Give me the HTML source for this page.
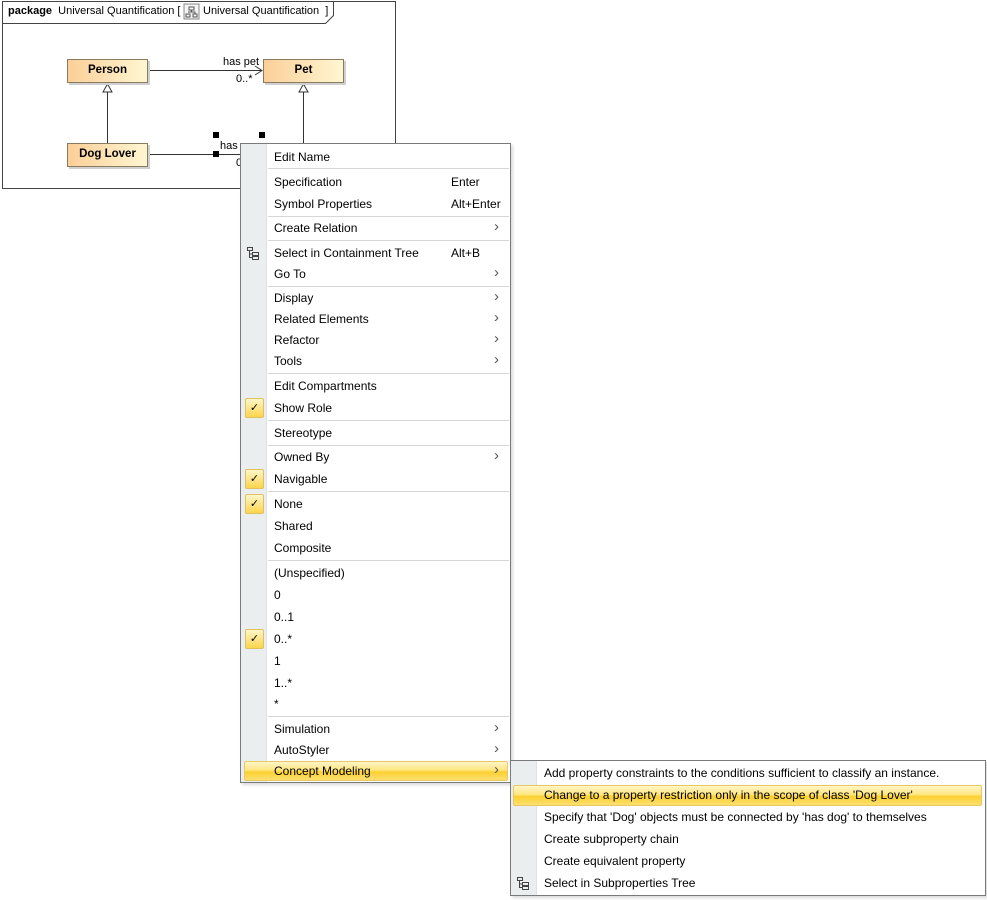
<!DOCTYPE html>
<html><head><meta charset="utf-8"><style>
*{margin:0;padding:0;box-sizing:border-box}
body{width:987px;height:900px;background:#fff;position:relative;overflow:hidden;font-family:"Liberation Sans",sans-serif}
.a{position:absolute}
.cls{position:absolute;width:81px;height:24px;border:1px solid #8a7a60;background:linear-gradient(90deg,#fbcf98,#fff6d2);font-weight:bold;font-size:11.5px;text-align:center;line-height:20px;box-shadow:2px 2px 0 #d0d0d0}
.menu{position:absolute;background:#fff;border:1px solid #7a7a7a;box-shadow:2px 2px 3px rgba(0,0,0,.15)}
.gut{position:absolute;left:0;top:0;bottom:0;width:26px;background:#eaeeee;border-right:1px solid #dfe3e3}
.it{position:absolute;font-size:12px;color:#000;line-height:14px}
.sc{position:absolute;font-size:12px;line-height:14px}
.ar{position:absolute;font-size:15px;color:#555;line-height:14px}
.sep{position:absolute;height:1px;background:#d6d6d6}
.hl{position:absolute;border:1px solid #e8c860;border-radius:2px;background:linear-gradient(#fff5c8 0%,#ffe680 45%,#fbd030 55%,#fde070 100%)}
.chk{position:absolute;width:19px;height:20px;border:1px solid #e0c060;border-radius:2px;background:linear-gradient(#fff6c8,#fbd54a);font-size:11px;text-align:center;line-height:18px}
.h{position:absolute;width:6px;height:6px;background:#000}
</style></head><body>
<svg class="a" style="left:0;top:0" width="400" height="195">
<path d="M2.5 1.5H395.5V188.5H2.5Z" fill="none" stroke="#444"/>
<path d="M2.5 23.5H325.5L333.5 15.5V1.5" fill="none" stroke="#444"/>
<rect x="184" y="4" width="15" height="15" fill="#f4f4f4" stroke="#888"/>
<path d="M189 7h5v3h-5zM186 14h4v3h-4zM193 14h4v3h-4zM191.5 10v2M188 12h7v2" fill="none" stroke="#555"/>
<line x1="148" y1="70.5" x2="262" y2="70.5" stroke="#333"/>
<path d="M255 66L262 70.5L255 75" fill="none" stroke="#333"/>
<line x1="107.5" y1="92" x2="107.5" y2="143" stroke="#333"/>
<path d="M103 92L107.5 84L112 92Z" fill="#fff" stroke="#333"/>
<line x1="303.5" y1="92" x2="303.5" y2="143" stroke="#333"/>
<path d="M299 92L303.5 84L308 92Z" fill="#fff" stroke="#333"/>
<line x1="148" y1="154.5" x2="240" y2="154.5" stroke="#333"/>
<text x="223" y="65" font-size="11" font-family="Liberation Sans">has pet</text>
<text x="236" y="82" font-size="11" font-family="Liberation Sans">0..*</text>
<text x="220" y="149" font-size="11" font-family="Liberation Sans">has</text>
<text x="236" y="166" font-size="11" font-family="Liberation Sans">0</text>
</svg>
<div class="a" style="left:8px;top:4px;font-size:11px;line-height:14px"><b>package</b>&nbsp; Universal Quantification [</div>
<div class="a" style="left:203px;top:4px;font-size:11px;line-height:14px">Universal Quantification&nbsp; ]</div>
<div class="cls" style="left:67px;top:59px">Person</div>
<div class="cls" style="left:263px;top:59px">Pet</div>
<div class="cls" style="left:67px;top:143px">Dog Lover</div>
<div class="h" style="left:213px;top:132px"></div>
<div class="h" style="left:259px;top:132px"></div>
<div class="h" style="left:213px;top:151px"></div>

<div class="menu" style="left:240px;top:143px;width:271px;height:640px"><div class="gut"></div></div>
<div class="menu" style="left:510px;top:760px;width:476px;height:136px"><div class="gut"></div></div>

<div id="m"></div>
<script>
var m=document.getElementById('m'),h='';
var items=[["Edit Name",157],["Specification",182,"Enter"],["Symbol Properties",204,"Alt+Enter"],["Create Relation",228,0,1],["Select in Containment Tree",253,"Alt+B"],["Go To",274,0,1],["Display",298,0,1],["Related Elements",319,0,1],["Refactor",340,0,1],["Tools",361,0,1],["Edit Compartments",386],["Show Role",408],["Stereotype",433],["Owned By",457,0,1],["Navigable",479],["None",504],["Shared",526],["Composite",548],["(Unspecified)",573],["0",595],["0..1",617],["0..*",639],["1",661],["1..*",683],["*",704],["Simulation",729,0,1],["AutoStyler",750,0,1],["Concept Modeling",771,0,1]];
[168,216,240,286,373,420,445,491,560,716].forEach(function(y){h+='<div class="sep" style="left:268px;width:241px;top:'+y+'px"></div>'});
h+='<div class="hl" style="left:244px;top:761px;width:264px;height:20px"></div>';
h+='<div class="hl" style="left:513px;top:785px;width:469px;height:21px"></div>';
[408,479,504,639].forEach(function(y){h+='<div class="chk" style="left:245px;top:'+(y-10)+'px">&#10003;</div>'});
items.forEach(function(i){h+='<div class="it" style="left:274px;top:'+(i[1]-7)+'px">'+i[0]+'</div>';if(i[2])h+='<div class="sc" style="left:451px;top:'+(i[1]-7)+'px">'+i[2]+'</div>';if(i[3])h+='<div class="ar" style="left:494px;top:'+(i[1]-8)+'px">&rsaquo;</div>'});
[["Add property constraints to the conditions sufficient to classify an instance.",773],["Change to a property restriction only in the scope of class 'Dog Lover'",795],["Specify that 'Dog' objects must be connected by 'has dog' to themselves",817],["Create subproperty chain",839],["Create equivalent property",861],["Select in Subproperties Tree",883]].forEach(function(i){h+='<div class="it" style="left:544px;top:'+(i[1]-7)+'px">'+i[0]+'</div>'});
function tree(x,y){return '<svg class="a" style="left:'+x+'px;top:'+y+'px" width="14" height="14"><path d="M1.5 1.5h5v3h-5zM6.5 6.5h6v3h-6zM6.5 10.5h6v3h-6zM3.5 4.5v7h3M3.5 8h3" fill="none" stroke="#444"/></svg>'}
h+=tree(246,246)+tree(516,876);
m.innerHTML=h;
</script>
</body></html>
